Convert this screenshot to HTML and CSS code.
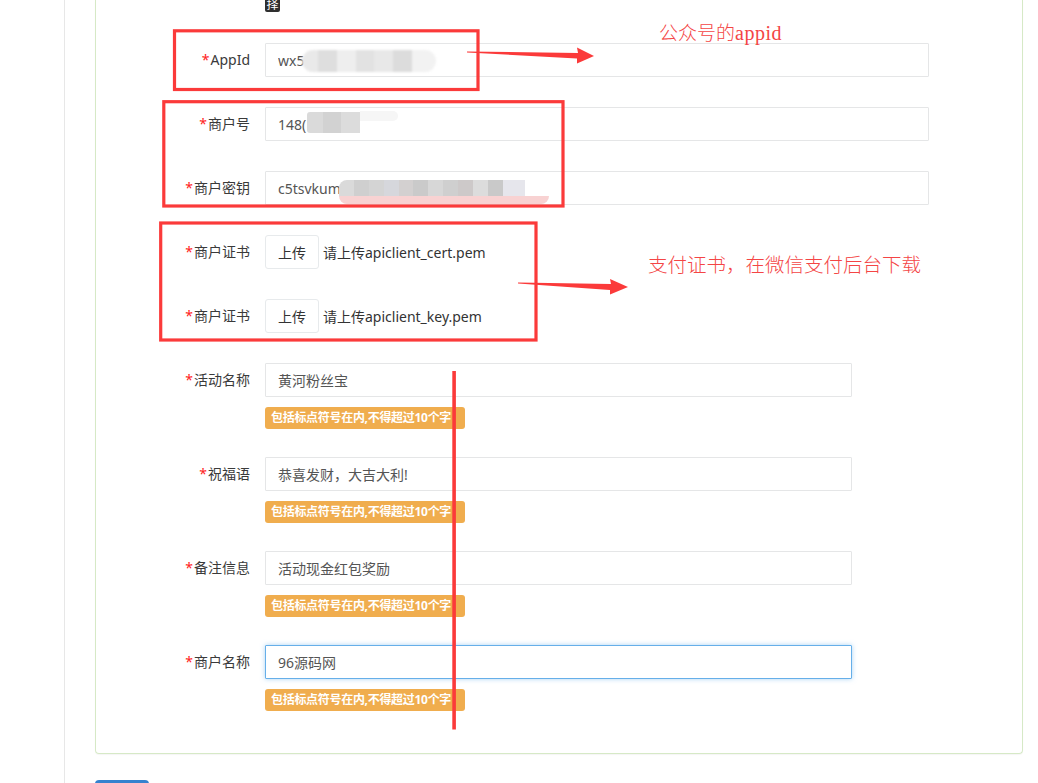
FILE: index.html
```html
<!DOCTYPE html>
<html lang="zh-CN">
<head>
<meta charset="utf-8">
<title>红包配置</title>
<link rel="stylesheet" href="styles.css">
</head>
<body>
<div class="page">
  <aside class="sidebar"></aside>
  <main class="main">
    <section class="panel">
      <div class="form">
        <div class="row row-stub">
          <div class="label"></div>
          <div class="field"><span class="stub">择</span></div>
        </div>

        <div class="row">
          <label class="label"><span class="req">*</span>AppId</label>
          <div class="field">
            <input class="control wide" value="wx5">
            <span class="mosaic m-appid"></span>
          </div>
        </div>

        <div class="row">
          <label class="label"><span class="req">*</span>商户号</label>
          <div class="field">
            <input class="control wide" value="148(">
            <span class="mosaic m-mch"></span>
            <span class="mosaic m-mch2"></span>
          </div>
        </div>

        <div class="row">
          <label class="label"><span class="req">*</span>商户密钥</label>
          <div class="field">
            <input class="control wide" value="c5tsvkum">
            <span class="mosaic m-key"></span>
            <span class="mosaic m-key-pink"></span>
          </div>
        </div>

        <div class="row">
          <label class="label"><span class="req">*</span>商户证书</label>
          <div class="field upload">
            <button class="btn-upload" type="button">上传</button>
            <span class="hint">请上传apiclient_cert.pem</span>
          </div>
        </div>

        <div class="row">
          <label class="label"><span class="req">*</span>商户证书</label>
          <div class="field upload">
            <button class="btn-upload" type="button">上传</button>
            <span class="hint">请上传apiclient_key.pem</span>
          </div>
        </div>

        <div class="row group">
          <label class="label"><span class="req">*</span>活动名称</label>
          <div class="field">
            <input class="control narrow" value="黄河粉丝宝">
            <span class="badge">包括标点符号在内,不得超过10个字</span>
          </div>
        </div>

        <div class="row group">
          <label class="label"><span class="req">*</span>祝福语</label>
          <div class="field">
            <input class="control narrow" value="恭喜发财，大吉大利!">
            <span class="badge">包括标点符号在内,不得超过10个字</span>
          </div>
        </div>

        <div class="row group">
          <label class="label"><span class="req">*</span>备注信息</label>
          <div class="field">
            <input class="control narrow" value="活动现金红包奖励">
            <span class="badge">包括标点符号在内,不得超过10个字</span>
          </div>
        </div>

        <div class="row group last">
          <label class="label"><span class="req">*</span>商户名称</label>
          <div class="field">
            <input class="control narrow focus" value="96源码网">
            <span class="badge">包括标点符号在内,不得超过10个字</span>
          </div>
        </div>
      </div>
    </section>
    <button class="btn-primary" type="button" aria-label="保存"></button>
  </main>
</div>

<svg class="annot" width="1038" height="783" viewBox="0 0 1038 783" xmlns="http://www.w3.org/2000/svg">
  <g fill="none" stroke="#fb3a3a" stroke-width="3.2">
    <rect x="174.5" y="30.8" width="303.5" height="58.7"/>
    <rect x="163.8" y="101.7" width="399.2" height="104.3"/>
    <rect x="160.7" y="223" width="375.3" height="117"/>
  </g>
  <g fill="#fb3a3a">
    <polygon points="467,51.5 578,53 577,47.5 594,56 577,63.5 577,58.5 467,52.5"/>
    <polygon points="518,282.5 611,284 610,279 628,287 610,294.5 610,290 518,283.5"/>
    <rect x="452.3" y="371" width="3.6" height="358.5"/>
  </g>
</svg>
<div class="note note-1">公众号的<span class="latin">appid</span></div>
<div class="note note-2">支付证书，在微信支付后台下载</div>
</body>
</html>
```

FILE: styles.css
```css
html, body {
  margin: 0;
  padding: 0;
  overflow: hidden;
  background: #fff;
}

body {
  font-family: "Noto Sans", "Noto Sans CJK SC", sans-serif;
  font-size: 14px;
  color: #333;
  position: relative;
  width: 1038px;
  height: 783px;
}

.page {
  display: flex;
  height: 783px;
}

.sidebar {
  width: 64px;
  flex: none;
  border-right: 1px solid #e7e7e7;
}

.main {
  flex: 1;
  padding: 0 15px 0 30px;
}

.panel {
  border: 1px solid #d6e9c6;
  border-top: none;
  border-radius: 0 0 4px 4px;
  box-shadow: 0 1px 1px rgba(0, 0, 0, 0.04);
  padding-bottom: 42px;
}

.form {
  display: flex;
  flex-direction: column;
}

.row {
  display: grid;
  grid-template-columns: 154px 1fr;
  column-gap: 15px;
  margin-bottom: 30px;
}

.row-stub {
  margin-bottom: 31px;
}

.row.group {
  margin-bottom: 28px;
}

.row.last {
  margin-bottom: 0;
}

.label {
  text-align: right;
  line-height: 34px;
  font-size: 14px;
  color: #3a3a3a;
  white-space: nowrap;
}

.req {
  color: #f22;
  margin-right: 1px;
}

.field {
  position: relative;
  display: flex;
  flex-direction: column;
  align-items: flex-start;
}

.stub {
  display: block;
  width: 15px;
  height: 12px;
  background: #2f2f2f;
  color: #fff;
  font-size: 12px;
  line-height: 10px;
  text-align: center;
  overflow: hidden;
  border-radius: 0 0 2px 2px;
}

.control {
  box-sizing: border-box;
  height: 34px;
  padding: 6px 12px;
  border: 1px solid #e5e6e7;
  border-radius: 1px;
  background: #fff;
  font-family: "Noto Sans", "Noto Sans CJK SC", sans-serif;
  font-size: 14px;
  color: #555;
  outline: none;
}

.control.wide {
  width: 664px;
}

.control.narrow {
  width: 587px;
}

.control.focus {
  border-color: #66afe9;
  box-shadow: 0 0 5px rgba(102, 175, 233, 0.55);
}

.mosaic {
  position: absolute;
  display: block;
}

.m-appid {
  left: 37px;
  top: 7px;
  width: 134px;
  height: 22px;
  border-radius: 11px;
  background: linear-gradient(90deg, #e9e9e9 0 12%, #dedede 12% 26%, #eeeeee 26% 40%, #e2e2e2 40% 54%, #e8e8e8 54% 68%, #dcdcdc 68% 82%, #f2f2f2 82%);
  filter: blur(0.8px);
}

.m-mch {
  left: 42px;
  top: 5px;
  width: 53px;
  height: 21px;
  background: linear-gradient(90deg, #dadada 0 30%, #d2d2d2 30% 65%, #dcdcdc 65%);
  border-radius: 3px 0 0 3px;
}

.m-mch2 {
  left: 95px;
  top: 4px;
  width: 38px;
  height: 10px;
  background: #f6f6f6;
  border-radius: 0 6px 6px 0;
}

.m-key {
  left: 74px;
  top: 9px;
  width: 186px;
  height: 17px;
  border-radius: 8px 0 0 0;
  background: linear-gradient(90deg, #dadada 0 8%, #cfcfcf 8% 16%, #d4d4d4 16% 24%, #d6d7dc 24% 32%, #d3d0d0 32% 40%, #cacaca 40% 48%, #d7d7d7 48% 56%, #cfcfcf 56% 64%, #cdc9c9 64% 72%, #dcdcdc 72% 80%, #c9c9c9 80% 88%, #e6e6ec 88%);
}

.m-key-pink {
  left: 74px;
  top: 25px;
  width: 210px;
  height: 8px;
  border-radius: 0 0 8px 8px;
  background: #f8d2d2;
}

.upload {
  flex-direction: row;
  align-items: center;
}

.btn-upload {
  box-sizing: border-box;
  height: 34px;
  width: 54px;
  padding: 0;
  border: 1px solid #e7eaec;
  border-radius: 3px;
  background: #fff;
  font-family: "Noto Sans", "Noto Sans CJK SC", sans-serif;
  font-size: 14px;
  color: #333;
}

.hint {
  margin-left: 4px;
  font-size: 14px;
  color: #333;
}

.badge {
  margin-top: 10px;
  display: inline-block;
  box-sizing: border-box;
  height: 22px;
  line-height: 22px;
  width: 200px;
  padding: 0 0 0 6px;
  background: #f0ad4e;
  color: #fff;
  font-size: 12px;
  font-weight: 700;
  border-radius: 3px;
  white-space: nowrap;
  overflow: hidden;
  letter-spacing: -0.3px;
}

.btn-primary {
  display: block;
  margin-top: 26px;
  width: 54px;
  height: 34px;
  border: none;
  border-radius: 4px;
  background: #3582cf;
}

.annot {
  position: absolute;
  left: 0;
  top: 0;
  pointer-events: none;
}

.note {
  position: absolute;
  color: #f44545;
  font-family: "Liberation Serif", "Noto Sans CJK SC", serif;
  font-size: 19px;
  line-height: 20px;
  white-space: nowrap;
  font-weight: 300;
}

.note .latin {
  font-size: 20px;
  letter-spacing: 0.5px;
}

.note-1 {
  left: 659px;
  top: 23px;
}

.note-2 {
  left: 648px;
  top: 256px;
  font-size: 19.5px;
}
```
